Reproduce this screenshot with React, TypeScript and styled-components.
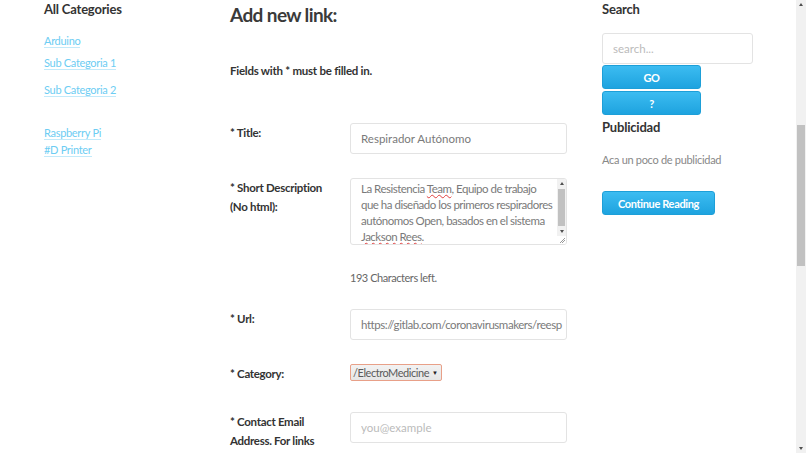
import React from "react"
import styled, { createGlobalStyle } from "styled-components"

const GlobalStyle = createGlobalStyle`
	html, body {
		margin: 0;
		padding: 0;
		overflow: hidden;
		background: #ffffff;
	}

	body {
		font-family: Lato, "Open Sans", sans-serif;
		color: #333333;
	}
`

const PageElement = styled.div`
	display: flex;
	flex-direction: row;
	width: 806px;
	height: 453px;
	overflow: hidden;
`

const ContentElement = styled.div`
	flex-grow: 1;
	display: grid;
	grid-template-columns: 186px 372px 151px;
	padding-left: 44px;
	align-items: start;
`

const ColumnElement = styled.div`
	display: flex;
	flex-direction: column;
	align-items: flex-start;
`

const SideHeading = styled.h3<{ $top?: number }>`
	margin: ${p => p.$top ?? 1}px 0 0;
	font-size: 13px;
	line-height: 17px;
	font-weight: 700;
	letter-spacing: -0.2px;
	color: #333333;
`

const CategoryList = styled.ul`
	list-style: none;
	margin: 0;
	padding: 0;
	display: flex;
	flex-direction: column;
	align-items: flex-start;
`

const CategoryItem = styled.li<{ $top: number }>`
	margin-top: ${p => p.$top}px;
	font-size: 11px;
	line-height: 15px;
`

const CategoryLink = styled.a`
	font-size: 11px;
	letter-spacing: -0.3px;
	color: #6dcdf3;
	text-decoration: none;
	border-bottom: 1px solid #c2eafa;
	cursor: pointer;
`

const PageTitle = styled.h1`
	margin: 3px 0 0;
	font-size: 19px;
	line-height: 24px;
	font-weight: 700;
	letter-spacing: -0.6px;
	color: #3a3a3a;
`

const RequiredNote = styled.p`
	margin: 34px 0 0;
	font-size: 11.5px;
	line-height: 19px;
	font-weight: 700;
	letter-spacing: -0.25px;
	color: #333333;
`

const FieldRow = styled.div<{ $top: number }>`
	display: grid;
	grid-template-columns: 120px 217px;
	margin-top: ${p => p.$top}px;
	align-items: start;
`

const FieldLabel = styled.label`
	font-size: 11.5px;
	line-height: 19px;
	font-weight: 700;
	letter-spacing: -0.3px;
	color: #333333;
`

const TextInput = styled.input<{ $tight?: boolean }>`
	box-sizing: border-box;
	width: 100%;
	height: 31px;
	padding: 0 2px 0 10px;
	border: 1px solid #e3e3e3;
	border-radius: 3px;
	font-family: inherit;
	font-size: 11.5px;
	letter-spacing: ${p => p.$tight ? "-0.45px" : "0"};
	color: #7a7a7a;
	background: #ffffff;
	outline: none;

	&::placeholder {
		color: #bbbbbb;
	}
`

const DescriptionBox = styled.div`
	box-sizing: border-box;
	height: 67px;
	display: flex;
	flex-direction: row;
	border: 1px solid #e3e3e3;
	border-radius: 3px;
	overflow: hidden;
`

const DescriptionText = styled.div`
	flex-grow: 1;
	padding: 2px 4px 0 10px;
	font-size: 11.5px;
	line-height: 16px;
	letter-spacing: -0.5px;
	color: #7a7a7a;
	overflow: hidden;
`

const DescriptionLine = styled.span`
	display: block;
	white-space: nowrap;
`

const Misspelled = styled.span`
	text-decoration: underline wavy #e04040;
	text-decoration-thickness: 1px;
	text-underline-offset: 1px;
`

const ScrollTrack = styled.div<{ $width: number }>`
	width: ${p => p.$width}px;
	flex-shrink: 0;
	display: flex;
	flex-direction: column;
	align-items: center;
	background: #f1f1f1;
`

const ScrollArrow = styled.div<{ $down?: boolean }>`
	height: 9px;
	width: 100%;
	display: flex;
	align-items: center;
	justify-content: center;

	&::after {
		content: "";
		border-left: 2.5px solid transparent;
		border-right: 2.5px solid transparent;
		${p => p.$down ? "border-top: 3px solid #505050;" : "border-bottom: 3px solid #505050;"}
	}
`

const ScrollSpace = styled.div<{ $grow: number }>`
	flex-grow: ${p => p.$grow};
`

const ScrollThumb = styled.div<{ $height: number }>`
	width: calc(100% - 2px);
	height: ${p => p.$height}px;
	background: #c1c1c1;
`

const ResizeGrip = styled.div`
	height: 8px;
	width: 100%;
	background: #ffffff;
	position: relative;

	&::after {
		content: "";
		position: absolute;
		right: 1px;
		bottom: 1px;
		width: 5px;
		height: 5px;
		background: linear-gradient(135deg, transparent 45%, #999 45%, #999 55%, transparent 55%, transparent 70%, #999 70%, #999 80%, transparent 80%);
	}
`

const HintText = styled.p`
	margin: 23px 0 0 120px;
	font-size: 11px;
	line-height: 19px;
	letter-spacing: -0.45px;
	color: #666666;
`

const SelectBox = styled.div`
	display: inline-flex;
	align-items: center;
	justify-self: start;
	box-sizing: border-box;
	height: 17px;
	padding: 0 3px 0 2px;
	border: 1px solid #e8a088;
	border-radius: 2px;
	background: linear-gradient(#f2f2f2, #e6e6e6);
	font-size: 11px;
	letter-spacing: -0.45px;
	color: #5a5a5a;
	gap: 3px;
`

const SelectArrow = styled.span`
	font-size: 6px;
	color: #222222;
`

const SearchInput = styled(TextInput)`
	margin-top: 15px;
	width: 151px;
`

const BlueButton = styled.button<{ $width: number; $top?: number }>`
	box-sizing: border-box;
	width: ${p => p.$width}px;
	height: 24px;
	margin-top: ${p => p.$top ?? 0}px;
	padding: 0;
	border: 1px solid #1d9fd8;
	border-radius: 3px;
	background: linear-gradient(#3cbcf1, #1ea3df);
	color: #ffffff;
	font-family: inherit;
	font-size: 11px;
	font-weight: 700;
	letter-spacing: -0.35px;
	cursor: pointer;
`

const AdText = styled.p`
	margin: 14px 0 0;
	font-size: 11px;
	line-height: 19px;
	letter-spacing: -0.3px;
	color: #888888;
`

function Scrollbar({ width, top, thumb, bottom, grip }: {
	width: number,
	top: number,
	thumb: number,
	bottom: number,
	grip?: boolean,
}) {
	return (
		<ScrollTrack $width={width}>
			<ScrollArrow />
			<ScrollSpace $grow={top} />
			<ScrollThumb $height={thumb} />
			<ScrollSpace $grow={bottom} />
			<ScrollArrow $down />
			{grip ? <ResizeGrip /> : null}
		</ScrollTrack>
	)
}

const categories = [
	{ name: "Arduino", top: 15 },
	{ name: "Sub Categoria 1", top: 7 },
	{ name: "Sub Categoria 2", top: 12 },
	{ name: "Raspberry Pi", top: 28 },
	{ name: "#D Printer", top: 2 },
]

export default function App() {
	return (
		<PageElement>
			<GlobalStyle />
			<ContentElement>
				<ColumnElement>
					<SideHeading>All Categories</SideHeading>
					<CategoryList>
						{categories.map(category => (
							<CategoryItem key={category.name} $top={category.top}>
								<CategoryLink>{category.name}</CategoryLink>
							</CategoryItem>
						))}
					</CategoryList>
				</ColumnElement>

				<ColumnElement>
					<PageTitle>Add new link:</PageTitle>
					<RequiredNote>Fields with * must be filled in.</RequiredNote>

					<FieldRow $top={43}>
						<FieldLabel>* Title:</FieldLabel>
						<TextInput defaultValue="Respirador Autónomo" />
					</FieldRow>

					<FieldRow $top={24}>
						<FieldLabel>* Short Description<br />(No html):</FieldLabel>
						<DescriptionBox>
							<DescriptionText>
								<DescriptionLine>La Resistencia <Misspelled>Team</Misspelled>, Equipo de trabajo</DescriptionLine>
								<DescriptionLine>que ha diseñado los primeros respiradores</DescriptionLine>
								<DescriptionLine>autónomos Open, basados en el sistema</DescriptionLine>
								<DescriptionLine><Misspelled>Jackson Rees</Misspelled>.</DescriptionLine>
							</DescriptionText>
							<Scrollbar width={9} top={2} thumb={37} bottom={5} grip />
						</DescriptionBox>
					</FieldRow>

					<HintText>193 Characters left.</HintText>

					<FieldRow $top={22}>
						<FieldLabel>* Url:</FieldLabel>
						<TextInput $tight defaultValue="https://gitlab.com/coronavirusmakers/reesp" />
					</FieldRow>

					<FieldRow $top={24}>
						<FieldLabel>* Category:</FieldLabel>
						<SelectBox>
							/ElectroMedicine
							<SelectArrow>▼</SelectArrow>
						</SelectBox>
					</FieldRow>

					<FieldRow $top={29}>
						<FieldLabel>* Contact Email<br />Address. For links</FieldLabel>
						<TextInput placeholder="you@example" />
					</FieldRow>
				</ColumnElement>

				<ColumnElement>
					<SideHeading>Search</SideHeading>
					<SearchInput placeholder="search..." />
					<BlueButton $width={99} $top={1}>GO</BlueButton>
					<BlueButton $width={99} $top={2}>?</BlueButton>
					<SideHeading $top={4}>Publicidad</SideHeading>
					<AdText>Aca un poco de publicidad</AdText>
					<BlueButton $width={113} $top={22}>Continue Reading</BlueButton>
				</ColumnElement>
			</ContentElement>
			<Scrollbar width={10} top={118} thumb={141} bottom={181} />
		</PageElement>
	)
}
